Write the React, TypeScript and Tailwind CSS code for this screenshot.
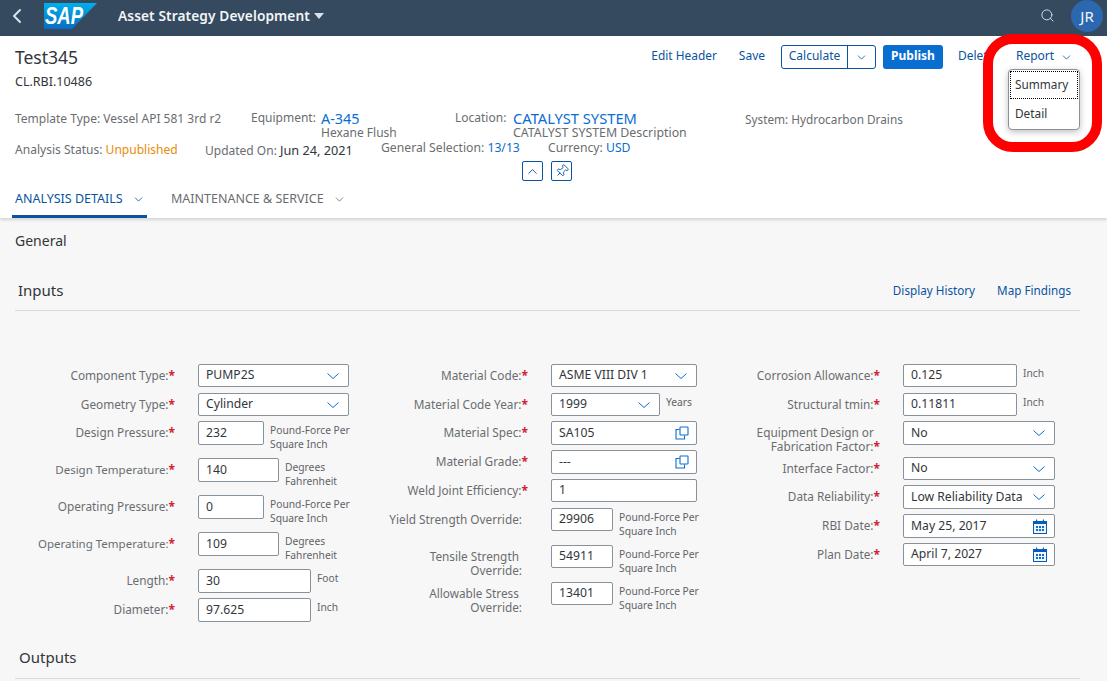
import React from "react";
import { ChevronDown, ChevronLeft, ChevronUp, Pin, Search } from "lucide-react";

const Chev = ({ size = 16 }: { size?: number }) => (
  <svg width={size} height={size} viewBox="0 0 16 16" fill="none" stroke="#0a6ed1" strokeWidth="1" className="shrink-0">
    <path d="M2.5 5.5 L8 10.5 L13.5 5.5" />
  </svg>
);

const CopyIcon = () => (
  <svg width="14" height="14" viewBox="0 0 14 14" fill="none" stroke="#0a6ed1" strokeWidth="1.1" className="shrink-0">
    <path d="M4.5 3.5 H1 V13 H9.5 V9.5" />
    <rect x="5" y="1" width="8" height="8" rx="0.5" />
  </svg>
);

const CalIcon = () => (
  <svg width="14" height="15" viewBox="0 0 14 15" className="shrink-0">
    <rect x="0.5" y="2.5" width="13" height="12" fill="#eef5fc" stroke="#0a5cb0" />
    <rect x="0.5" y="2" width="13" height="3" fill="#0a5cb0" />
    <rect x="3" y="0.5" width="1.2" height="2" fill="#0a5cb0" />
    <rect x="9.8" y="0.5" width="1.2" height="2" fill="#0a5cb0" />
    {[3, 6, 9].map((x) =>
      [7, 10].map((y) => <rect key={`${x}-${y}`} x={x} y={y} width="2" height="2" fill="#0a6ed1" />)
    )}
  </svg>
);

type RowProps = {
  h: string;
  lw: string;
  label: React.ReactNode;
  req?: boolean;
  w: string;
  ih?: string;
  value: string;
  icon?: "chev" | "copy" | "cal";
  unit?: React.ReactNode;
};

function Row({ h, lw, label, req, w, ih = "h-[24px]", value, icon, unit }: RowProps) {
  return (
    <div className={`flex items-start ${h}`}>
      <div className={`${lw} shrink-0 text-right text-[11.8px] leading-[14px] text-[#6a6d70] pt-[4px] ${req ? "" : "pr-[6px]"}`}>
        {label}
        {req && <span className="text-[#d0222e] font-bold text-[12px] leading-[10px]">*</span>}
      </div>
      <div className={`${w} ${ih} ml-[23px] shrink-0 flex items-center justify-between bg-white border border-[#89919a] rounded-[2px] pl-[7px] pr-[7px] text-[12.2px] text-[#32363a]`}>
        <span className="whitespace-nowrap">{value}</span>
        {icon === "chev" && <Chev />}
        {icon === "copy" && <CopyIcon />}
        {icon === "cal" && <CalIcon />}
      </div>
      {unit && <div className="ml-[6px] mt-[2px] text-[10.25px] leading-[14px] text-[#5f6368] whitespace-nowrap">{unit}</div>}
    </div>
  );
}

const PF = (
  <>
    Pound-Force Per
    <br />
    Square Inch
  </>
);
const DF = (
  <>
    Degrees
    <br />
    Fahrenheit
  </>
);

export default function App() {
  return (
    <div className="relative w-[1107px] h-[681px] overflow-hidden bg-[#f7f7f7] font-['Noto_Sans',sans-serif] text-[#32363a]">
      {/* Shell bar */}
      <div className="h-[36px] pb-[4px] bg-[#354a5f] flex items-center text-white">
        <ChevronLeft size={24} strokeWidth={2} className="ml-[5px] text-[#d9e2ea]" />
        <svg width="53" height="26" viewBox="0 0 53 26" className="ml-[15px] shrink-0">
          <defs>
            <linearGradient id="sapg" x1="0" y1="0" x2="0" y2="1">
              <stop offset="0" stopColor="#00b1eb" />
              <stop offset="1" stopColor="#0a6cc4" />
            </linearGradient>
          </defs>
          <polygon points="0,0 53,0 28,26 0,26" fill="url(#sapg)" />
          <text x="1" y="21" fontFamily="Liberation Sans" fontWeight="700" fontStyle="italic" fontSize="23" textLength="38" lengthAdjust="spacingAndGlyphs" fill="#fff">SAP</text>
        </svg>
        <span className="ml-[21px] text-[13.7px] font-semibold tracking-[0.1px] whitespace-nowrap text-[#f2f5f7]">Asset Strategy Development</span>
        <svg width="10" height="6" viewBox="0 0 10 6" className="ml-[4px]"><polygon points="0,0 10,0 5,6" fill="#d9e2ea" /></svg>
        <Search size={15} strokeWidth={1.5} className="ml-auto mb-[1px] text-[#d9e2ea]" />
        <div className="ml-[16px] mr-[4px] w-[32px] h-[32px] rounded-full bg-[#2b68b0] flex items-center justify-center text-[15px] text-[#f2f5f7]">JR</div>
      </div>

      {/* Object header */}
      <div className="h-[182px] bg-white shadow-[0_2px_3px_rgba(0,0,0,0.14)] relative flex flex-col">
        <div className="flex items-start px-[15px] h-[74px]">
          <div className="pt-[9px]">
            <div className="text-[17.5px] leading-[24px] text-[#32363a]">Test345</div>
            <div className="mt-[5px] text-[12.5px] leading-[16px] text-[#32363a]">CL.RBI.10486</div>
          </div>
          <div className="ml-auto mr-[-15px] mt-[9px] flex items-center h-[24px] text-[12px] text-[#0854a0]">
            <span className="pb-[2px] text-[11.9px]">Edit Header</span>
            <span className="pb-[2px] ml-[22px] mr-[1px]">Save</span>
            <div className="ml-[15px] h-[24px] w-[95px] flex border border-[#0854a0] rounded-[3px]">
              <span className="w-[66px] flex items-center justify-center border-r border-[#0854a0] pb-[2px]">Calculate</span>
              <span className="flex-1 flex items-center justify-center"><ChevronDown size={13} strokeWidth={1.5} /></span>
            </div>
            <span className="ml-[7px] h-[24px] w-[60px] rounded-[3px] bg-[#0a6ed1] text-white font-bold flex items-center justify-center pb-[2px]">Publish</span>
            <span className="pb-[2px] ml-[15px] w-[35px] overflow-hidden whitespace-nowrap">Delete</span>
            <div className="w-[114px] h-[24px] bg-white flex items-center pl-[23px]">
              <span className="pb-[2px]">Report</span>
              <ChevronDown size={13} strokeWidth={1.5} className="ml-[6px]" />
            </div>
          </div>
        </div>

        <div className="flex items-start pl-[15px] h-[30px] text-[12px] leading-[16px] text-[#6a6d70]">
          <div className="w-[236px] pt-[1px] whitespace-nowrap">Template Type: Vessel API 581 3rd r2</div>
          <div className="w-[70px]">Equipment:</div>
          <div className="w-[134px]">
            <div className="text-[14.4px] text-[#0a6ed1] leading-[15px] pt-[1px]">A-345</div>
            <div className="leading-[14px]">Hexane Flush</div>
          </div>
          <div className="w-[58px]">Location:</div>
          <div className="w-[232px] whitespace-nowrap">
            <div className="text-[14.7px] text-[#0a6ed1] leading-[15px] pt-[1px]">CATALYST SYSTEM</div>
            <div className="leading-[14px] text-[12.35px]">CATALYST SYSTEM Description</div>
          </div>
          <div className="pt-[1px] whitespace-nowrap text-[11.8px]">System: Hydrocarbon Drains</div>
        </div>

        <div className="flex items-start pl-[15px] h-[21px] text-[12px] leading-[16px] text-[#6a6d70] whitespace-nowrap">
          <div className="w-[190px] pt-[2px] text-[12.05px]">Analysis Status: <span className="text-[#e78c07]">Unpublished</span></div>
          <div className="w-[176px] pt-[2px]">Updated On: <span className="text-[#32363a] text-[12.7px]">Jun 24, 2021</span></div>
          <div className="w-[167px] text-[12.2px]">General Selection: <span className="text-[#0a6ed1]">13/13</span></div>
          <div className="text-[12.2px]">Currency: <span className="text-[#0a6ed1]">USD</span></div>
        </div>

        <div className="flex justify-start pl-[522px] gap-[8px] h-[21px]">
          <div className="w-[21px] h-[20px] border border-[#0854a0] rounded-[2px] flex items-center justify-center text-[#0854a0]"><ChevronUp size={15} strokeWidth={1.5} /></div>
          <div className="w-[21px] h-[20px] border border-[#0854a0] rounded-[2px] flex items-center justify-center text-[#0854a0]"><Pin size={14} strokeWidth={1.5} className="rotate-45" /></div>
        </div>

        <div className="mt-auto flex pl-[12px] h-[36px] text-[12.5px]">
          <div className="w-[135px] pl-[3px] pt-[1px] h-[36px] border-b-[3px] border-[#0854a0] flex items-center text-[#0854a0]">
            <span>ANALYSIS DETAILS</span>
            <ChevronDown size={13} strokeWidth={1.5} className="ml-[9px]" />
          </div>
          <div className="ml-[24px] flex items-center text-[#6a6d70] pb-[2px]">
            <span>MAINTENANCE &amp; SERVICE</span>
            <ChevronDown size={13} strokeWidth={1.5} className="ml-[9px]" />
          </div>
        </div>
      </div>

      {/* Body */}
      <div className="pl-[15px] pt-[14px] text-[14px] leading-[18px] text-[#32363a]">General</div>
      <div className="mx-[15px] w-[1065px] mt-[28px] h-[33px] pt-[1px] border-b border-[#d9d9d9] flex items-start pl-[3px] text-[15px] leading-[22px] text-[#32363a]">
        <span>Inputs</span>
        <span className="ml-auto mt-[3px] text-[11.7px] leading-[16px] text-[#0854a0]">Display History</span>
        <span className="ml-[22px] mr-[9px] mt-[3px] text-[11.7px] leading-[16px] text-[#0854a0]">Map Findings</span>
      </div>

      <div className="flex mt-[53px] h-[282px]">
        <div className="w-[376px] shrink-0">
          <Row h="h-[29px]" lw="w-[175px]" label="Component Type:" req w="w-[151px]" ih="h-[23px]" value="PUMP2S" icon="chev" />
          <Row h="h-[28px]" lw="w-[175px]" label="Geometry Type:" req w="w-[151px]" ih="h-[23px]" value="Cylinder" icon="chev" />
          <Row h="h-[37px]" lw="w-[175px]" label="Design Pressure:" req w="w-[66px]" value="232" unit={PF} />
          <Row h="h-[37px]" lw="w-[175px]" label={<span className="text-[11.5px]">Design Temperature:</span>} req w="w-[81px]" value="140" unit={DF} />
          <Row h="h-[37px]" lw="w-[175px]" label="Operating Pressure:" req w="w-[66px]" value="0" unit={PF} />
          <Row h="h-[37px]" lw="w-[175px]" label={<span className="text-[11.5px]">Operating Temperature:</span>} req w="w-[81px]" value="109" unit={DF} />
          <Row h="h-[29px]" lw="w-[175px]" label="Length:" req w="w-[113px]" value="30" unit="Foot" />
          <Row h="h-[24px]" lw="w-[175px]" label="Diameter:" req w="w-[113px]" value="97.625" unit="Inch" />
        </div>
        <div className="w-[352px] shrink-0">
          <Row h="h-[29px]" lw="w-[152px]" label="Material Code:" req w="w-[146px]" ih="h-[23px]" value="ASME VIII DIV 1" icon="chev" />
          <Row h="h-[28px]" lw="w-[152px]" label="Material Code Year:" req w="w-[109px]" ih="h-[23px]" value="1999" icon="chev" unit="Years" />
          <Row h="h-[29px]" lw="w-[152px]" label="Material Spec:" req w="w-[146px]" value="SA105" icon="copy" />
          <Row h="h-[29px]" lw="w-[152px]" label="Material Grade:" req w="w-[146px]" value="---" icon="copy" />
          <Row h="h-[29px]" lw="w-[152px]" label="Weld Joint Efficiency:" req w="w-[146px]" ih="h-[23px]" value="1" />
          <Row h="h-[37px]" lw="w-[152px]" label="Yield Strength Override:" w="w-[62px]" ih="h-[23px]" value="29906" unit={PF} />
          <Row h="h-[37px]" lw="w-[152px]" label={<>Tensile Strength&nbsp;<br />Override:</>} w="w-[62px]" ih="h-[23px]" value="54911" unit={PF} />
          <Row h="h-[37px]" lw="w-[152px]" label={<>Allowable Stress&nbsp;<br />Override:</>} w="w-[62px]" ih="h-[23px]" value="13401" unit={PF} />
        </div>
        <div className="w-[352px] shrink-0">
          <Row h="h-[29px]" lw="w-[152px]" label="Corrosion Allowance:" req w="w-[114px]" ih="h-[23px]" value="0.125" unit="Inch" />
          <Row h="h-[28px]" lw="w-[152px]" label="Structural tmin:" req w="w-[114px]" ih="h-[23px]" value="0.11811" unit="Inch" />
          <Row h="h-[36px]" lw="w-[152px]" label={<>Equipment Design or&nbsp;&nbsp;<br />Fabrication Factor:</>} req w="w-[152px]" value="No" icon="chev" />
          <Row h="h-[28px]" lw="w-[152px]" label="Interface Factor:" req w="w-[152px]" ih="h-[23px]" value="No" icon="chev" />
          <Row h="h-[29px]" lw="w-[152px]" label="Data Reliability:" req w="w-[152px]" value="Low Reliability Data" icon="chev" />
          <Row h="h-[29px]" lw="w-[152px]" label="RBI Date:" req w="w-[152px]" value="May 25, 2017" icon="cal" />
          <Row h="h-[29px]" lw="w-[152px]" label="Plan Date:" req w="w-[152px]" ih="h-[23px]" value="April 7, 2027" icon="cal" />
        </div>
      </div>

      <div className="mx-[15px] w-[1065px] h-[33px] border-b border-[#d9d9d9] pl-[4px] text-[15px] leading-[22px] text-[#32363a]">Outputs</div>

      {/* Dropdown menu */}
      <div className="absolute left-[1008px] top-[69px] w-[72px] h-[61px] bg-white border border-[#89919a] rounded-[4px] shadow-[0_2px_6px_rgba(0,0,0,0.25)] text-[11.8px] text-[#32363a] p-[1px]">
        <div className="h-[28px] border border-dotted border-black flex items-center pl-[4px]">Summary</div>
        <div className="h-[30px] flex items-center pl-[5px]">Detail</div>
      </div>

      {/* Red annotation ring */}
      <div className="absolute left-[983px] top-[34px] w-[119px] h-[118px] border-[10px] border-[#ff0000] rounded-[30px]" />
    </div>
  );
}
